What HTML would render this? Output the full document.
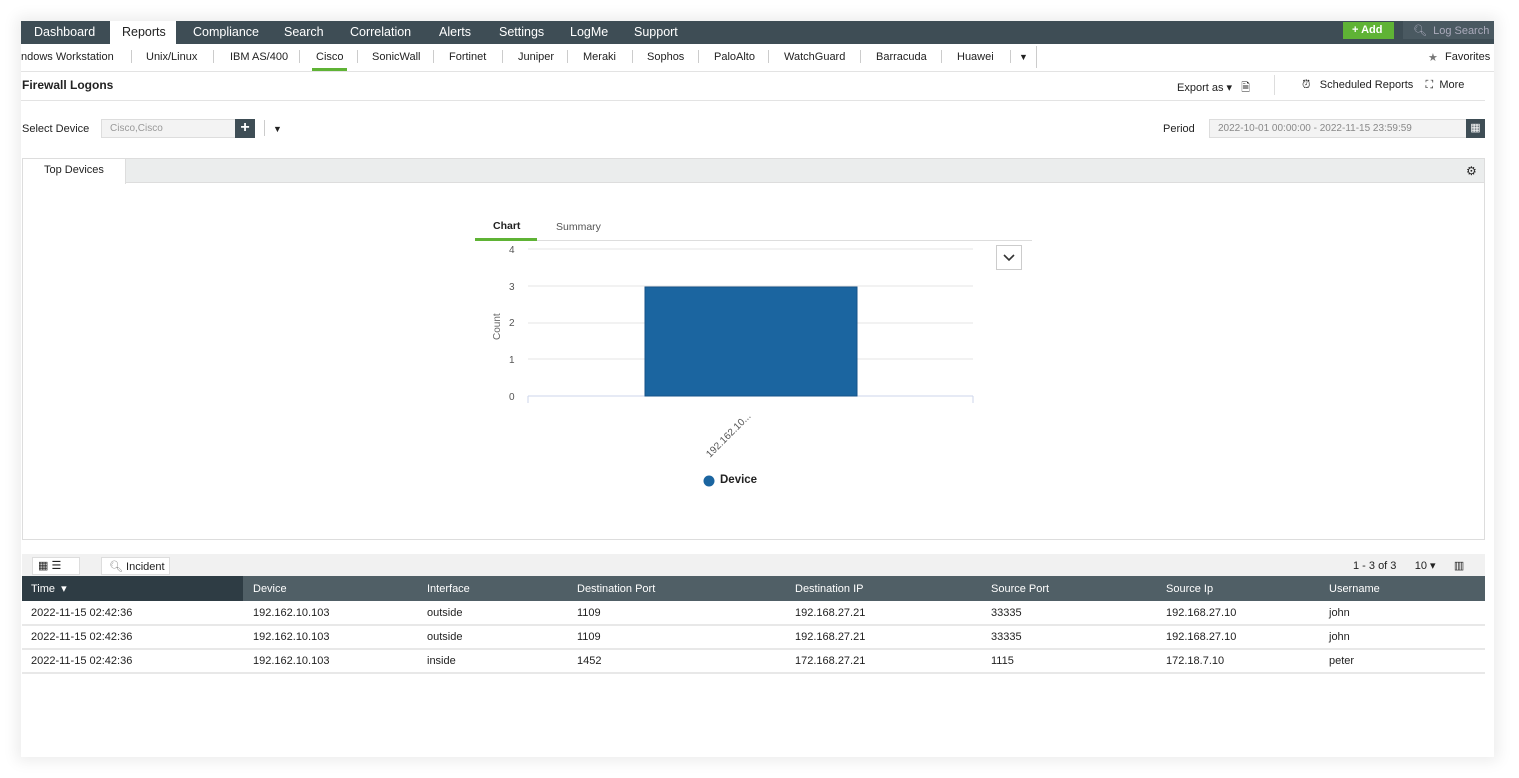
<!DOCTYPE html>
<html><head><style>
*{margin:0;padding:0;box-sizing:border-box}
body{width:1519px;height:778px;background:#fff;font-family:"Liberation Sans",sans-serif;font-size:11px;color:#222;position:relative;overflow:hidden}
.a{position:absolute;white-space:nowrap}
#card{position:absolute;left:21px;top:21px;width:1473px;height:736px;background:#fff;box-shadow:0 0 14px 4px rgba(0,0,0,.08)}
.nav{left:21px;top:21px;width:1473px;height:23px;background:#3e4d55}
.nav span{position:absolute;top:4px;color:#fff;font-size:12.5px}
.sub span{position:absolute;top:51px;font-size:11px;color:#222}
.sep{position:absolute;top:50px;width:1px;height:13px;background:#ccc}
th,td{text-align:left;font-weight:normal;white-space:nowrap}
</style></head><body>
<div id="card"></div>
<div class="a nav">
<div class="a" style="left:89px;top:0;width:66px;height:23px;background:#fff"></div>
<span style="left:13px">Dashboard</span>
<span style="left:101px;color:#222">Reports</span>
<span style="left:172px">Compliance</span>
<span style="left:263px">Search</span>
<span style="left:329px">Correlation</span>
<span style="left:418px">Alerts</span>
<span style="left:478px">Settings</span>
<span style="left:549px">LogMe</span>
<span style="left:613px">Support</span>
<div class="a" style="left:1322px;top:1px;width:51px;height:17px;background:#5fb335;color:#fff;font-size:11px;font-weight:bold;padding:2px 0 0 9px">+ Add</div>
<div class="a" style="left:1382px;top:0;width:91px;height:18px;background:#4a5961;color:#aab;font-size:11px;padding:3px 0 0 10px;overflow:hidden">&#x1F50D;&#xFE0E; &nbsp;Log Search</div>
</div>
<div class="sub">
<span style="left:21px">ndows Workstation</span><i class="sep" style="left:131px"></i>
<span style="left:146px">Unix/Linux</span><i class="sep" style="left:213px"></i>
<span style="left:230px">IBM AS/400</span><i class="sep" style="left:299px"></i>
<span style="left:316px">Cisco</span><i class="sep" style="left:357px"></i>
<span style="left:372px">SonicWall</span><i class="sep" style="left:433px"></i>
<span style="left:449px">Fortinet</span><i class="sep" style="left:502px"></i>
<span style="left:518px">Juniper</span><i class="sep" style="left:567px"></i>
<span style="left:583px">Meraki</span><i class="sep" style="left:632px"></i>
<span style="left:647px">Sophos</span><i class="sep" style="left:698px"></i>
<span style="left:714px">PaloAlto</span><i class="sep" style="left:768px"></i>
<span style="left:784px">WatchGuard</span><i class="sep" style="left:860px"></i>
<span style="left:876px">Barracuda</span><i class="sep" style="left:941px"></i>
<span style="left:957px">Huawei</span><i class="sep" style="left:1010px"></i>
<span style="left:1019px;top:52px;font-size:9px">▼</span><i class="sep" style="left:1036px;top:46px;height:22px"></i>
<span style="left:1428px;color:#777">★</span><span style="left:1445px">Favorites</span>
</div>
<div class="a" style="left:312px;top:68px;width:35px;height:3px;background:#5fb335"></div>
<div class="a" style="left:21px;top:71px;width:1473px;height:1px;background:#e3e3e3"></div>
<div class="a" style="left:22px;top:78px;font-size:12px;font-weight:bold;color:#222">Firewall Logons</div>
<div class="a" style="left:1177px;top:79px;font-size:11px">Export as ▾ &nbsp;&nbsp;&#x1F5CE;&#xFE0E;</div>
<div class="a" style="left:1274px;top:75px;width:1px;height:20px;background:#ddd"></div>
<div class="a" style="left:1302px;top:79px;font-size:11px">⏰&#xFE0E; &nbsp;&nbsp;Scheduled Reports &nbsp;&nbsp;&nbsp;⛶ &nbsp;More</div>
<div class="a" style="left:21px;top:100px;width:1464px;height:1px;background:#e3e3e3"></div>
<div class="a" style="left:22px;top:123px">Select Device</div>
<div class="a" style="left:101px;top:119px;width:135px;height:19px;background:#f3f3f3;border:1px solid #ddd;color:#999;font-size:10px;padding:3px 0 0 8px">Cisco,Cisco</div>
<div class="a" style="left:235px;top:119px;width:20px;height:19px;background:#3e4d55;color:#fff;font-size:16px;font-weight:bold;text-align:center;line-height:18px">+</div>
<div class="a" style="left:264px;top:120px;width:1px;height:16px;background:#ccc"></div>
<div class="a" style="left:273px;top:124px;font-size:9px">▼</div>
<div class="a" style="left:1163px;top:123px">Period</div>
<div class="a" style="left:1209px;top:119px;width:258px;height:19px;background:#f3f3f3;border:1px solid #ddd;color:#888;font-size:10px;padding:3px 0 0 8px">2022-10-01 00:00:00 - 2022-11-15 23:59:59</div>
<div class="a" style="left:1466px;top:119px;width:19px;height:19px;background:#3e4d55;color:#fff;font-size:11px;text-align:center;line-height:19px">▦</div>
<div class="a" style="left:22px;top:158px;width:1463px;height:382px;border:1px solid #ddd"></div>
<div class="a" style="left:23px;top:159px;width:1461px;height:24px;background:#ebeded;border-bottom:1px solid #ddd"></div>
<div class="a" style="left:23px;top:159px;width:103px;height:25px;background:#fff;border-right:1px solid #ddd;font-size:11px;padding:5px 0 0 21px">Top Devices</div>
<div class="a" style="left:1466px;top:164px;font-size:12px">⚙</div>
<div class="a" style="left:493px;top:220px;font-weight:bold;font-size:10.5px">Chart</div>
<div class="a" style="left:556px;top:221px;color:#555;font-size:10.5px">Summary</div>
<div class="a" style="left:475px;top:240px;width:557px;height:1px;background:#ddd"></div>
<div class="a" style="left:475px;top:238px;width:62px;height:3px;background:#5fb335"></div>
<div class="a" style="left:996px;top:245px;width:26px;height:25px;border:1px solid #ccc"></div>
<svg class="a" style="left:1003px;top:254px" width="12" height="8"><path d="M1 1 L6 6 L11 1" stroke="#333" stroke-width="1.6" fill="none"/></svg>
<svg class="a" style="left:470px;top:240px" width="520" height="230">
<g stroke="#e6e6e6"><line x1="58" y1="9" x2="503" y2="9"/><line x1="58" y1="46" x2="503" y2="46"/><line x1="58" y1="83" x2="503" y2="83"/><line x1="58" y1="119" x2="503" y2="119"/></g>
<line x1="58" y1="156" x2="503" y2="156" stroke="#ccd6eb"/>
<line x1="58" y1="156" x2="58" y2="163" stroke="#ccd6eb"/><line x1="503" y1="156" x2="503" y2="163" stroke="#ccd6eb"/>
<rect x="175" y="47" width="212" height="109" fill="#1b65a0" stroke="#165288"/>
<g font-family="Liberation Sans" font-size="10" fill="#555"><text x="39" y="13">4</text><text x="39" y="50">3</text><text x="39" y="86">2</text><text x="39" y="123">1</text><text x="39" y="160">0</text></g>
<text transform="translate(30,100) rotate(-90)" font-family="Liberation Sans" font-size="10" fill="#666">Count</text>
<text transform="translate(240,218) rotate(-45)" font-family="Liberation Sans" font-size="10" fill="#555">192.162.10...</text>
</svg>
<div class="a" style="left:720px;top:474px;font-weight:bold;font-size:11.5px">Device</div>
<svg class="a" style="left:703px;top:475px" width="12" height="12"><circle cx="6" cy="6" r="5.5" fill="#1b65a0"/></svg>
<div class="a" style="left:22px;top:554px;width:1463px;height:22px;background:#f1f1f1"></div>
<div class="a" style="left:32px;top:557px;width:48px;height:18px;background:#fff;border:1px solid #ddd;font-size:11px;padding:1px 0 0 5px">▦ ☰</div>
<div class="a" style="left:101px;top:557px;width:69px;height:18px;background:#fff;border:1px solid #ddd;padding:2px 0 0 7px;color:#888">&#x1F50D;&#xFE0E; <span style="color:#222">Incident</span></div>
<div class="a" style="left:1353px;top:559px">1 - 3 of 3 &nbsp;&nbsp;&nbsp;&nbsp;&nbsp;10 ▾ &nbsp;&nbsp;&nbsp;&nbsp;&nbsp;▥</div>
<table class="a" style="left:22px;top:576px;width:1463px;border-collapse:collapse;font-size:11px">
<tr style="height:25px;background:#505f66;color:#fff"><th style="background:#2e3c44;padding-left:9px;width:221px">Time &nbsp;▾</th><th style="padding-left:10px;width:174px">Device</th><th style="padding-left:10px;width:150px">Interface</th><th style="padding-left:10px;width:218px">Destination Port</th><th style="padding-left:10px;width:196px">Destination IP</th><th style="padding-left:10px;width:175px">Source Port</th><th style="padding-left:10px;width:163px">Source Ip</th><th style="padding-left:10px">Username</th></tr>
<tr style="height:24px;border-bottom:2px solid #e8e8e8"><td style="padding-left:9px">2022-11-15 02:42:36</td><td style="padding-left:10px">192.162.10.103</td><td style="padding-left:10px">outside</td><td style="padding-left:10px">1109</td><td style="padding-left:10px">192.168.27.21</td><td style="padding-left:10px">33335</td><td style="padding-left:10px">192.168.27.10</td><td style="padding-left:10px">john</td></tr>
<tr style="height:24px;border-bottom:2px solid #e8e8e8"><td style="padding-left:9px">2022-11-15 02:42:36</td><td style="padding-left:10px">192.162.10.103</td><td style="padding-left:10px">outside</td><td style="padding-left:10px">1109</td><td style="padding-left:10px">192.168.27.21</td><td style="padding-left:10px">33335</td><td style="padding-left:10px">192.168.27.10</td><td style="padding-left:10px">john</td></tr>
<tr style="height:24px;border-bottom:2px solid #e8e8e8"><td style="padding-left:9px">2022-11-15 02:42:36</td><td style="padding-left:10px">192.162.10.103</td><td style="padding-left:10px">inside</td><td style="padding-left:10px">1452</td><td style="padding-left:10px">172.168.27.21</td><td style="padding-left:10px">1115</td><td style="padding-left:10px">172.18.7.10</td><td style="padding-left:10px">peter</td></tr>
</table>
</body></html>
